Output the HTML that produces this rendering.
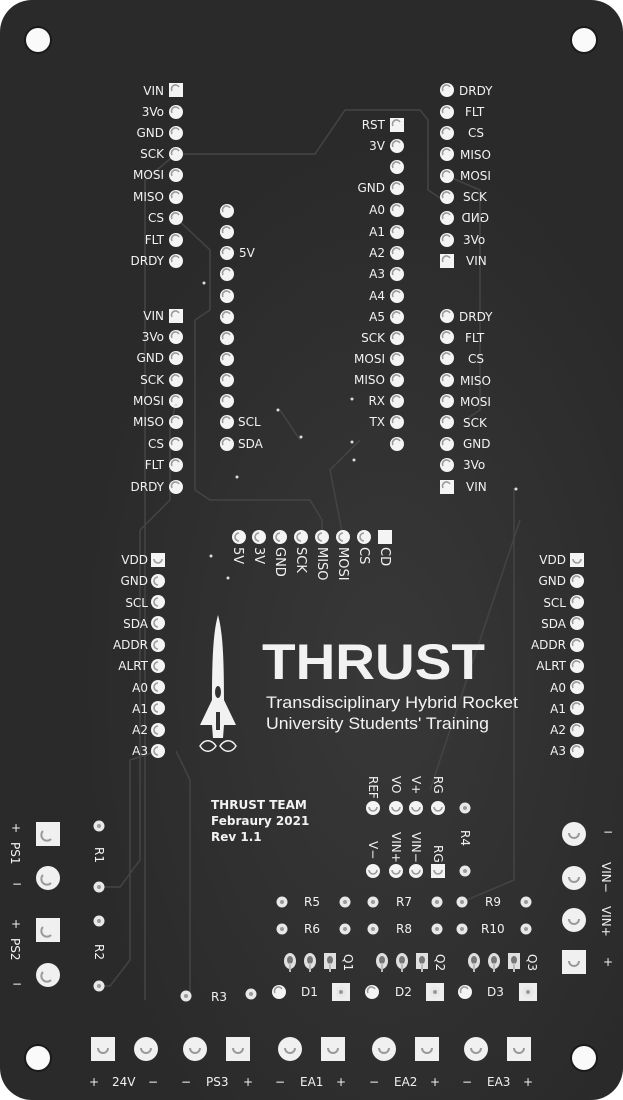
<!DOCTYPE html>
<html><head><meta charset="utf-8"><style>
html,body{margin:0;padding:0;background:#fff;}
svg{display:block}
text{font-family:"DejaVu Sans","Liberation Sans",sans-serif;fill:#f2f2f2;font-size:12px;}
.b{font-weight:bold}
.r text{font-size:13px}
</style></head><body>
<svg width="623" height="1100" viewBox="0 0 623 1100" xmlns="http://www.w3.org/2000/svg">
<defs>
<radialGradient id="bg" cx="0.62" cy="0.62" r="0.5">
<stop offset="0" stop-color="#383838"/><stop offset="1" stop-color="#2a2a2a"/>
</radialGradient>
<g id="p"><circle r="7" fill="#f4f4f4"/><path d="M-4,1 A4,4 0 0 1 3,-3" stroke="#9a9a9a" stroke-width="1.6" fill="none"/></g>
<g id="pl"><circle r="7" fill="#f4f4f4"/><path d="M0,-4 A4,4 0 0 0 0,4" stroke="#9a9a9a" stroke-width="1.6" fill="none"/></g>
<g id="s"><rect x="-7" y="-7" width="14" height="14" fill="#f4f4f4"/><path d="M-4,1 A4,4 0 0 1 3,-3" stroke="#9a9a9a" stroke-width="1.6" fill="none"/></g>
<g id="d"><circle r="7" fill="#f4f4f4"/><path d="M-4,-1 A4,4 0 0 0 4,-1" stroke="#9a9a9a" stroke-width="1.6" fill="none"/></g>
<g id="ds"><rect x="-7" y="-7" width="14" height="14" fill="#f4f4f4"/><path d="M-4,-1 A4,4 0 0 0 4,-1" stroke="#9a9a9a" stroke-width="1.6" fill="none"/></g>
<g id="v"><circle r="5.5" fill="#e8e8e8"/><circle r="2" fill="#9a9a9a"/></g>
<g id="bc"><circle r="12" fill="#f0f0f0"/><path d="M-5,-3 A5,5 0 0 0 3,5" stroke="#9a9a9a" stroke-width="2" fill="none"/></g>
<g id="bs"><rect x="-12" y="-12" width="24" height="24" fill="#f0f0f0"/><path d="M-5,-3 A5,5 0 0 0 3,5" stroke="#9a9a9a" stroke-width="2" fill="none"/></g>
<g id="bcd"><circle r="12" fill="#f0f0f0"/><path d="M-5,-1 A5,5 0 0 0 5,-1" stroke="#9a9a9a" stroke-width="2" fill="none"/></g>
<g id="bsd"><rect x="-12" y="-12" width="24" height="24" fill="#f0f0f0"/><path d="M-5,-1 A5,5 0 0 0 5,-1" stroke="#9a9a9a" stroke-width="2" fill="none"/></g>
<g id="q"><ellipse rx="6" ry="8" fill="#e0e0e0"/><ellipse cy="-1" rx="3" ry="4" fill="#777"/><rect x="-1" y="2" width="2" height="9" fill="#bbb"/></g>
<g id="qs"><rect x="-6" y="-8" width="12" height="16" fill="#e0e0e0"/><ellipse cy="-1" rx="3" ry="4" fill="#777"/><rect x="-1" y="2" width="2" height="9" fill="#bbb"/></g>
<g id="h"><circle r="14" fill="#1a1a1a"/><circle r="12" fill="#fafafa"/></g>
</defs>
<rect x="0" y="0" width="623" height="1100" rx="32" fill="url(#bg)"/>

<g stroke="#444" stroke-width="1.5" fill="none">
<path d="M176,154 H315 L345,110 H420 L428,120 V190 L440,198"/>
<path d="M176,218 L210,250 V310 L195,320 V490 L210,500 H310 L322,520 V537"/>
<path d="M176,154 L145,180 V1000"/>
<path d="M447,176 L480,190 V410 L465,420"/>
<path d="M514,488 V880 L462,902"/>
<path d="M176,401 L170,430 V500 L140,530 V860 L120,887 H99"/>
<path d="M176,751 L190,780 V996"/>
<path d="M158,751 L130,760 V960 L110,986 H99"/>
<path d="M343,537 L330,470 L360,440"/>
<path d="M300,440 L280,410"/>
<path d="M520,520 L430,790"/>
</g>

<use href="#h" x="38" y="40"/><use href="#h" x="584" y="40"/><use href="#h" x="38" y="1058"/><use href="#h" x="584" y="1058"/>

<g text-anchor="end">
<text x="164" y="95">VIN</text><text x="164" y="116">3Vo</text><text x="164" y="137">GND</text><text x="164" y="158">SCK</text><text x="164" y="179">MOSI</text><text x="164" y="201">MISO</text><text x="164" y="222">CS</text><text x="164" y="244">FLT</text><text x="164" y="265">DRDY</text>
<text x="164" y="320">VIN</text><text x="164" y="341">3Vo</text><text x="164" y="362">GND</text><text x="164" y="384">SCK</text><text x="164" y="405">MOSI</text><text x="164" y="426">MISO</text><text x="164" y="448">CS</text><text x="164" y="469">FLT</text><text x="164" y="491">DRDY</text>
<text x="385" y="129">RST</text><text x="385" y="150">3V</text><text x="385" y="192">GND</text><text x="385" y="214">A0</text><text x="385" y="236">A1</text><text x="385" y="257">A2</text><text x="385" y="278">A3</text><text x="385" y="300">A4</text><text x="385" y="321">A5</text><text x="385" y="342">SCK</text><text x="385" y="363">MOSI</text><text x="385" y="384">MISO</text><text x="385" y="405">RX</text><text x="385" y="426">TX</text>
<text x="148" y="564">VDD</text><text x="148" y="585">GND</text><text x="148" y="607">SCL</text><text x="148" y="628">SDA</text><text x="148" y="649">ADDR</text><text x="148" y="670">ALRT</text><text x="148" y="692">A0</text><text x="148" y="713">A1</text><text x="148" y="734">A2</text><text x="148" y="755">A3</text>
<text x="566" y="564">VDD</text><text x="566" y="585">GND</text><text x="566" y="607">SCL</text><text x="566" y="628">SDA</text><text x="566" y="649">ADDR</text><text x="566" y="670">ALRT</text><text x="566" y="692">A0</text><text x="566" y="713">A1</text><text x="566" y="734">A2</text><text x="566" y="755">A3</text>
</g>
<use href="#s" x="176" y="90"/><use href="#p" x="176" y="112"/><use href="#p" x="176" y="133"/><use href="#p" x="176" y="154"/><use href="#p" x="176" y="175"/><use href="#p" x="176" y="197"/><use href="#p" x="176" y="218"/><use href="#p" x="176" y="240"/><use href="#p" x="176" y="261"/>
<use href="#s" x="176" y="316"/><use href="#p" x="176" y="337"/><use href="#p" x="176" y="358"/><use href="#p" x="176" y="380"/><use href="#p" x="176" y="401"/><use href="#p" x="176" y="422"/><use href="#p" x="176" y="444"/><use href="#p" x="176" y="465"/><use href="#p" x="176" y="487"/>
<use href="#p" x="227" y="211"/><use href="#p" x="227" y="232"/><use href="#p" x="227" y="253"/><use href="#p" x="227" y="274"/><use href="#p" x="227" y="296"/><use href="#p" x="227" y="317"/><use href="#p" x="227" y="338"/><use href="#p" x="227" y="359"/><use href="#p" x="227" y="380"/><use href="#p" x="227" y="401"/><use href="#p" x="227" y="422"/><use href="#p" x="227" y="444"/>
<text x="239" y="257">5V</text><text x="238" y="426">SCL</text><text x="238" y="448">SDA</text>
<use href="#s" x="397" y="125"/><use href="#p" x="397" y="146"/><use href="#p" x="397" y="167"/><use href="#p" x="397" y="188"/><use href="#p" x="397" y="210"/><use href="#p" x="397" y="232"/><use href="#p" x="397" y="253"/><use href="#p" x="397" y="274"/><use href="#p" x="397" y="296"/><use href="#p" x="397" y="317"/><use href="#p" x="397" y="338"/><use href="#p" x="397" y="359"/><use href="#p" x="397" y="380"/><use href="#p" x="397" y="401"/><use href="#p" x="397" y="422"/><use href="#p" x="397" y="444"/>
<use href="#p" x="447" y="90"/><use href="#p" x="447" y="112"/><use href="#p" x="447" y="133"/><use href="#p" x="447" y="154"/><use href="#p" x="447" y="176"/><use href="#p" x="447" y="197"/><use href="#p" x="447" y="218"/><use href="#p" x="447" y="240"/><use href="#s" x="447" y="261"/>
<use href="#p" x="447" y="316"/><use href="#p" x="447" y="337"/><use href="#p" x="447" y="358"/><use href="#p" x="447" y="380"/><use href="#p" x="447" y="401"/><use href="#p" x="447" y="422"/><use href="#p" x="447" y="444"/><use href="#p" x="447" y="465"/><use href="#s" x="447" y="487"/>
<text x="459" y="95">DRDY</text><text x="465" y="116">FLT</text><text x="468" y="137">CS</text><text x="460" y="159">MISO</text><text x="460" y="180">MOSI</text><text x="463" y="201">SCK</text><text transform="translate(489,222) scale(-1,1)">GND</text><text x="463" y="244">3Vo</text><text x="466" y="265">VIN</text>
<text x="459" y="321">DRDY</text><text x="465" y="342">FLT</text><text x="468" y="363">CS</text><text x="460" y="385">MISO</text><text x="460" y="406">MOSI</text><text x="463" y="427">SCK</text><text x="463" y="448">GND</text><text x="463" y="469">3Vo</text><text x="466" y="491">VIN</text>
<use href="#pl" x="239" y="537"/><use href="#pl" x="259" y="537"/><use href="#pl" x="280" y="537"/><use href="#pl" x="301" y="537"/><use href="#pl" x="322" y="537"/><use href="#pl" x="343" y="537"/><use href="#pl" x="364" y="537"/><rect x="378" y="530" width="14" height="14" fill="#f4f4f4"/>
<g class="r">
<text transform="translate(234,547) rotate(90)">5V</text><text transform="translate(255,547) rotate(90)">3V</text><text transform="translate(276,547) rotate(90)">GND</text><text transform="translate(297,547) rotate(90)">SCK</text><text transform="translate(318,547) rotate(90)">MISO</text><text transform="translate(339,547) rotate(90)">MOSI</text><text transform="translate(360,547) rotate(90)">CS</text><text transform="translate(381,547) rotate(90)">CD</text>
</g>
<use href="#ds" x="158" y="560"/><use href="#pl" x="158" y="581"/><use href="#pl" x="158" y="602"/><use href="#pl" x="158" y="623"/><use href="#pl" x="158" y="645"/><use href="#pl" x="158" y="666"/><use href="#pl" x="158" y="687"/><use href="#pl" x="158" y="708"/><use href="#pl" x="158" y="730"/><use href="#pl" x="158" y="751"/>
<use href="#ds" x="577" y="560"/><use href="#p" x="577" y="581"/><use href="#p" x="577" y="602"/><use href="#p" x="577" y="623"/><use href="#p" x="577" y="645"/><use href="#p" x="577" y="666"/><use href="#p" x="577" y="687"/><use href="#p" x="577" y="708"/><use href="#p" x="577" y="730"/><use href="#p" x="577" y="751"/>

<g fill="#f2f2f2">
<path d="M218,615 C214,630 212,650 212,700 L200,725 L212,725 L213,738 L223,738 L224,725 L236,725 L224,700 C224,650 222,630 218,615 Z"/>
<ellipse cx="218" cy="692" rx="3" ry="6" fill="#333"/>
<rect x="216" y="712" width="4" height="18" fill="#333"/>
<path d="M200,746 C205,738 212,740 216,746 C212,752 205,754 200,746 Z M220,746 C224,740 231,738 236,746 C231,754 224,752 220,746 Z" fill="none" stroke="#f2f2f2" stroke-width="1.5"/>
</g>
<text x="262" y="679" textLength="223" lengthAdjust="spacingAndGlyphs" style="font-size:50px;font-weight:bold;font-family:'Liberation Sans',sans-serif">THRUST</text>
<text x="266" y="708" textLength="252" lengthAdjust="spacingAndGlyphs" style="font-size:17px;font-family:'Liberation Sans',sans-serif">Transdisciplinary Hybrid Rocket</text>
<text x="266" y="729" textLength="223" lengthAdjust="spacingAndGlyphs" style="font-size:17px;font-family:'Liberation Sans',sans-serif">University Students' Training</text>

<text x="211" y="809" class="b" style="font-size:12px">THRUST TEAM</text>
<text x="211" y="825" class="b" style="font-size:12px">Febraury 2021</text>
<text x="211" y="841" class="b" style="font-size:12px">Rev 1.1</text>

<text transform="translate(369,776) rotate(90)">REF</text><text transform="translate(392,776) rotate(90)">VO</text><text transform="translate(412,776) rotate(90)">V+</text><text transform="translate(434,776) rotate(90)">RG</text>
<use href="#d" x="373" y="808"/><use href="#d" x="396" y="808"/><use href="#d" x="416" y="808"/><use href="#d" x="438" y="808"/><use href="#v" x="465" y="808"/>
<text transform="translate(461,830) rotate(90)">R4</text>
<text transform="translate(369,841) rotate(90)">V−</text><text transform="translate(392,832) rotate(90)">VIN+</text><text transform="translate(412,832) rotate(90)">VIN−</text><text transform="translate(434,845) rotate(90)">RG</text>
<use href="#d" x="373" y="871"/><use href="#d" x="396" y="871"/><use href="#d" x="416" y="871"/><use href="#ds" x="438" y="871"/><use href="#v" x="465" y="871"/>

<use href="#v" x="282" y="902"/><use href="#v" x="345" y="902"/><use href="#v" x="373" y="902"/><use href="#v" x="437" y="902"/><use href="#v" x="462" y="902"/><use href="#v" x="526" y="902"/>
<use href="#v" x="282" y="929"/><use href="#v" x="345" y="929"/><use href="#v" x="373" y="929"/><use href="#v" x="437" y="929"/><use href="#v" x="462" y="929"/><use href="#v" x="526" y="929"/>
<text x="304" y="906">R5</text><text x="396" y="906">R7</text><text x="485" y="906">R9</text>
<text x="304" y="933">R6</text><text x="396" y="933">R8</text><text x="481" y="933">R10</text>
<use href="#q" x="290" y="961"/><use href="#q" x="310" y="961"/><use href="#qs" x="330" y="961"/>
<use href="#q" x="382" y="961"/><use href="#q" x="402" y="961"/><use href="#qs" x="422" y="961"/>
<use href="#q" x="474" y="961"/><use href="#q" x="494" y="961"/><use href="#qs" x="514" y="961"/>
<text transform="translate(344,954) rotate(90)">Q1</text><text transform="translate(436,954) rotate(90)">Q2</text><text transform="translate(528,954) rotate(90)">Q3</text>
<use href="#p" x="279" y="992"/><rect x="332" y="983" width="18" height="18" fill="#eee"/><use href="#v" x="341" y="992"/>
<use href="#p" x="372" y="992"/><rect x="426" y="983" width="18" height="18" fill="#eee"/><use href="#v" x="435" y="992"/>
<use href="#p" x="465" y="992"/><rect x="519" y="983" width="18" height="18" fill="#eee"/><use href="#v" x="528" y="992"/>
<text x="301" y="996">D1</text><text x="395" y="996">D2</text><text x="487" y="996">D3</text>
<use href="#v" x="186" y="996"/><use href="#v" x="251" y="994"/><text x="211" y="1001">R3</text>

<use href="#bs" x="48" y="834"/><use href="#bc" x="48" y="878"/>
<use href="#bs" x="48" y="930"/><use href="#bc" x="48" y="975"/>
<text x="11" y="832">+</text><text transform="translate(11,842) rotate(90)">PS1</text><text x="12" y="888">−</text>
<text x="11" y="928">+</text><text transform="translate(11,938) rotate(90)">PS2</text><text x="12" y="988">−</text>
<use href="#v" x="99" y="826"/><use href="#v" x="99" y="887"/><text transform="translate(95,847) rotate(90)">R1</text>
<use href="#v" x="99" y="921"/><use href="#v" x="99" y="986"/><text transform="translate(95,944) rotate(90)">R2</text>

<use href="#bcd" x="574" y="834"/><use href="#bcd" x="574" y="878"/><use href="#bcd" x="574" y="920"/><use href="#bsd" x="574" y="962"/>
<text x="603" y="836">−</text><text transform="translate(602,862) rotate(90)">VIN−</text><text transform="translate(602,906) rotate(90)">VIN+</text><text x="603" y="966">+</text>

<use href="#bsd" x="103" y="1049"/><use href="#bcd" x="146" y="1049"/><use href="#bcd" x="195" y="1049"/><use href="#bsd" x="238" y="1049"/><use href="#bcd" x="290" y="1049"/><use href="#bsd" x="333" y="1049"/><use href="#bcd" x="384" y="1049"/><use href="#bsd" x="427" y="1049"/><use href="#bcd" x="476" y="1049"/><use href="#bsd" x="519" y="1049"/>
<text x="89" y="1086">+</text><text x="112" y="1086">24V</text><text x="148" y="1086">−</text>
<text x="181" y="1086">−</text><text x="206" y="1086">PS3</text><text x="243" y="1086">+</text>
<text x="275" y="1086">−</text><text x="300" y="1086">EA1</text><text x="336" y="1086">+</text>
<text x="369" y="1086">−</text><text x="394" y="1086">EA2</text><text x="430" y="1086">+</text>
<text x="462" y="1086">−</text><text x="487" y="1086">EA3</text><text x="523" y="1086">+</text>

<g fill="#ddd"><circle cx="204" cy="283" r="1.5"/><circle cx="278" cy="410" r="1.5"/><circle cx="301" cy="437" r="1.5"/><circle cx="352" cy="399" r="1.5"/><circle cx="352" cy="442" r="1.5"/><circle cx="354" cy="460" r="1.5"/><circle cx="237" cy="477" r="1.5"/><circle cx="516" cy="489" r="1.5"/><circle cx="211" cy="556" r="1.5"/><circle cx="228" cy="578" r="1.5"/><circle cx="176" cy="405" r="1.5"/></g>
</svg>
</body></html>
